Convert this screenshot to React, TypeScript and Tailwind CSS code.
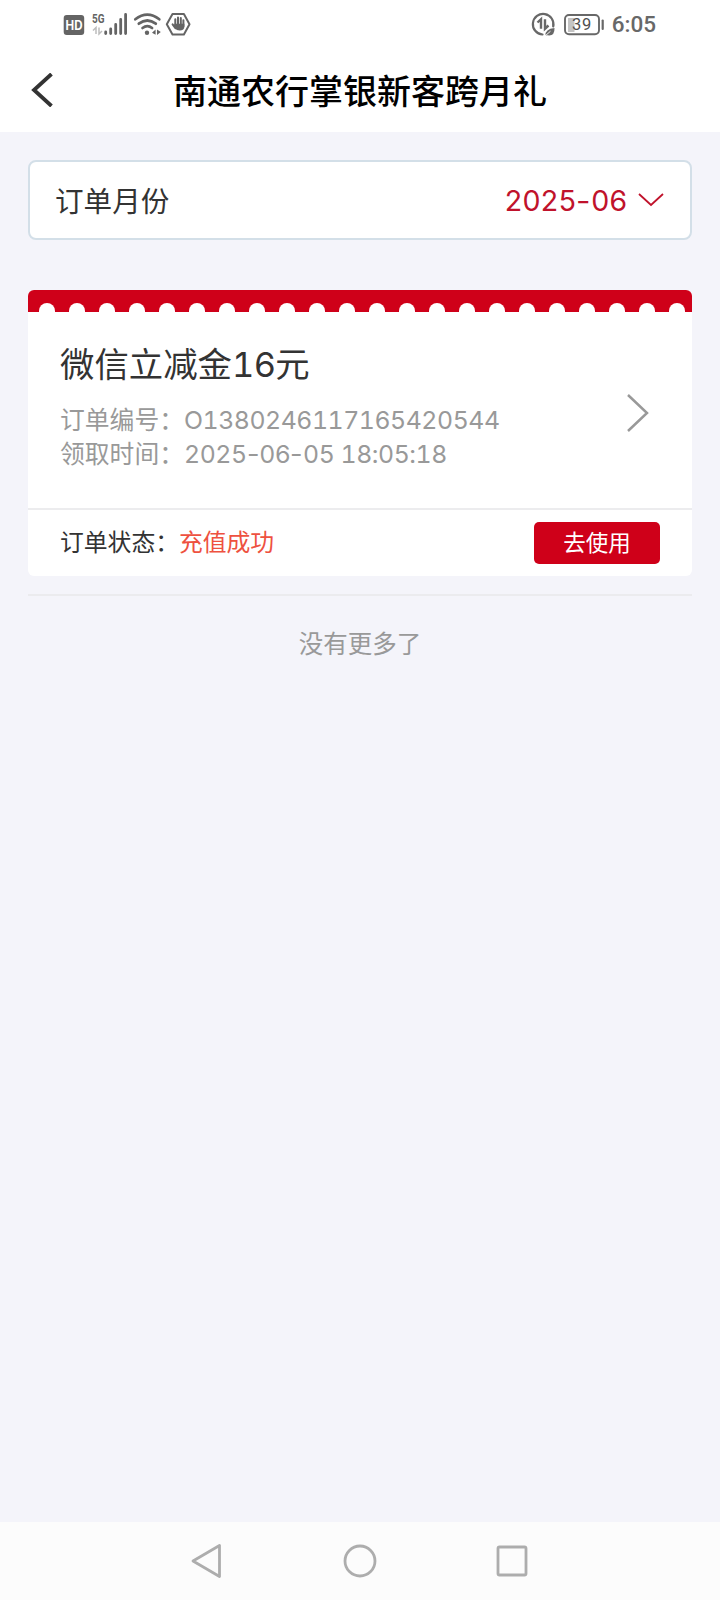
const order = {
  title: '微信立减金',
  amount: '16',
  number: 'O1380246117165420544',
  time: '2025-06-05 18:05:18',
  status: '充值成功',
}

function StatusBar() {
  return (
    <div className="flex h-12 items-center justify-between pr-[64px] pl-[63px] text-[#686868]">
      <svg width="130" height="48" viewBox="63 0 130 48" fill="none">
        {/* HD */}
        <rect x="63.7" y="15" width="20.5" height="20" rx="3" fill="#646464" />
        <text x="65.5" y="29.6" fontSize="12.5" fontWeight="700" fill="#fff" fontFamily="Inter, sans-serif" textLength="17" lengthAdjust="spacingAndGlyphs">HD</text>
        {/* 5G signal */}
        <text x="92" y="22.8" fontSize="12.8" fontWeight="700" fill="#646464" fontFamily="Roboto, sans-serif" textLength="12.5" lengthAdjust="spacingAndGlyphs">5G</text>
        <path d="M93 30.5l3-3V34M99 27.5V34l3-3" stroke="#bdbdbd" strokeWidth="1.5" />
        <path d="M105.7 32v1.6M110.7 29v4.6M115.7 24.5v9.1M120.7 19.5v14.1M125.6 14.5v19.1" stroke="#646464" strokeWidth="2.8" strokeLinecap="round" />
        {/* Wi-Fi */}
        <path d="M135.3 19.3Q147.3 9.8 159.3 19.3M138.8 23.7Q147.3 17.3 155.8 23.7M142.5 28Q147.3 24.3 152.1 28" stroke="#646464" strokeWidth="2.7" strokeLinecap="round" />
        <circle cx="147" cy="32.8" r="2.2" fill="#646464" />
        <path d="M152 32.8l3.6-3.3v5.2zM157 29.5v5.4l3.8-3z" fill="#646464" />
        {/* Hexagon with a raised hand */}
        <path d="M172.5 14h11.4l5.6 10.2-5.6 10.2h-11.4l-5.7-10.2z" stroke="#646464" strokeWidth="2" strokeLinejoin="round" />
        <path d="M175.3 19.3v6M178 17.5v8M180.8 18v7M183.4 20.3v6M172.6 24.3l3 4" stroke="#646464" strokeWidth="2" strokeLinecap="round" />
        <path d="M174.3 23.8h10.1v2.8q0 4-4.7 4-3.3 0-4.6-2.4z" fill="#646464" />
      </svg>
      <div className="flex items-center">
        <svg width="75" height="48" viewBox="530 0 75 48" fill="none">
          {/* Data saver */}
          <path d="M553.2 26.5a10.3 10.3 0 1 0-10.7 8" stroke="#686868" strokeWidth="2.2" strokeLinecap="round" />
          <path d="M537.5 22.5l3.5-3.3v9.5M545 19.2v9.5l3.5-3.2" stroke="#686868" strokeWidth="2.4" />
          <path d="M545.5 35.5q-.5-6.5 9-7.5.3 8.5-7 7.3z" fill="#686868" />
          <path d="M545 36l5.500-4.800" stroke="#fff" strokeWidth=".9" />
          {/* Battery */}
          <path d="M568 18h6.5v14H568z" fill="#c4c4c4" />
          <rect x="565" y="15" width="34" height="19.3" rx="4" stroke="#686868" strokeWidth="1.9" />
          <path d="M602.7 20.5v8.5" stroke="#686868" strokeWidth="2.2" strokeLinecap="round" />
          <text x="572" y="30.2" fontSize="16.5" fill="#505050" fontFamily="Roboto, sans-serif" letterSpacing=".8">39</text>
        </svg>
        <span className="ml-[7px] pt-px font-['Roboto',sans-serif] text-[22.5px] leading-none font-medium">6:05</span>
      </div>
    </div>
  )
}

// Even-width figures, with dashes a little narrower than a figure
function Digits({ value }: { value: string }) {
  return (
    <span className="font-['Inter',sans-serif] leading-none tracking-[-0.018em] tabular-nums">
      {value.split('-').map((part, i) => (
        <span key={i}>
          {i > 0 && <span className="inline-block w-[0.51em] scale-x-110 text-center tracking-normal proportional-nums">-</span>}
          {part}
        </span>
      ))}
    </span>
  )
}

function OrderCard() {
  return (
    <section className="mt-[50px] h-[286px] overflow-hidden rounded-md bg-white">
      <div className="flex h-[22px] items-end gap-[14px] bg-[#cf0019] pl-[11px]">
        {Array.from({ length: 22 }, (_, i) => (
          <span key={i} className="h-[9px] w-4 shrink-0 rounded-t-full bg-white" />
        ))}
      </div>
      <div className="flex h-[196px] items-start justify-between pr-[42px] pl-8">
        <div>
          <h2 className="mt-7 text-[34.4px] leading-[44px] whitespace-nowrap text-[#333]">
            {order.title}<Digits value={order.amount} />元
          </h2>
          <div className="mt-[17px] text-[24.8px] whitespace-nowrap text-[#999]">
            <p className="h-[34px] leading-[34px]">订单编号：<Digits value={order.number} /></p>
            <p className="h-[34px] leading-[34px]">领取时间：<Digits value={order.time} /></p>
          </div>
        </div>
        <svg className="mt-[81px]" width="24" height="40" viewBox="0 0 24 40" fill="none">
          <path d="M2 2l19 18L2 38" stroke="#999" strokeWidth="2.5" />
        </svg>
      </div>
      <div className="flex h-[68px] items-center justify-between border-t-2 border-[#ececee] px-8">
        <p className="pb-1 text-[23.8px] leading-8 text-[#333]">
          订单状态：<span className="text-[#ee5140]">{order.status}</span>
        </p>
        <button className="h-[42px] w-[126px] rounded-[5px] bg-[#cf0019] pb-1 text-[22.5px] leading-none text-white">去使用</button>
      </div>
    </section>
  )
}

export default function App() {
  return (
    <div className="flex h-[1600px] w-[720px] flex-col overflow-hidden bg-[#f4f4fa] font-['Noto_Sans_CJK_SC',sans-serif]">
      <header className="h-[132px] bg-white">
        <StatusBar />
        <div className="flex h-[84px] items-center px-[31px]">
          <svg width="22" height="34" viewBox="0 0 22 34" fill="none">
            <path d="M20.5 1L3 17l17.5 16" stroke="#333" strokeWidth="3.8" />
          </svg>
          <h1 className="mr-[22px] flex-1 text-center text-[34px] leading-none font-medium text-black">南通农行掌银新客跨月礼</h1>
        </div>
      </header>

      <main className="flex-1 px-7 pt-7">
        <div className="flex h-20 items-center justify-between rounded-lg border-2 border-[#d3dfe8] bg-white pr-[26px] pl-[25px]">
          <span className="text-[28.6px] text-[#333]">订单月份</span>
          <div className="flex items-center gap-[11px] text-[#c0122b]">
            <span className="text-[28.6px] leading-none"><Digits value="2025-06" /></span>
            <svg width="26" height="14" viewBox="0 0 26 14" fill="none">
              <path d="M1 1l12 11L25 1" stroke="currentColor" strokeWidth="1.8" />
            </svg>
          </div>
        </div>

        <OrderCard />

        <div className="mt-[18px] border-t-2 border-[#ebebee] pt-[30px] text-center text-[24.5px] leading-[34px] text-[#999]">没有更多了</div>
      </main>

      <nav className="flex h-[78px] items-center bg-[#fcfcfc] pl-[191px] text-[#adadad]">
        <svg width="32" height="36" viewBox="0 0 32 36" fill="none" stroke="currentColor" strokeWidth="2.8" strokeLinejoin="round">
          <path d="M28.5 2.5v31L2 18z" />
        </svg>
        <svg className="mr-[119px] ml-[120px]" width="34" height="34" viewBox="0 0 34 34" fill="none" stroke="currentColor" strokeWidth="2.8">
          <circle cx="17" cy="17" r="15" />
        </svg>
        <svg width="32" height="32" viewBox="0 0 32 32" fill="none" stroke="currentColor" strokeWidth="2.8">
          <rect x="2" y="2" width="28" height="28" rx="1.5" />
        </svg>
      </nav>
    </div>
  )
}
